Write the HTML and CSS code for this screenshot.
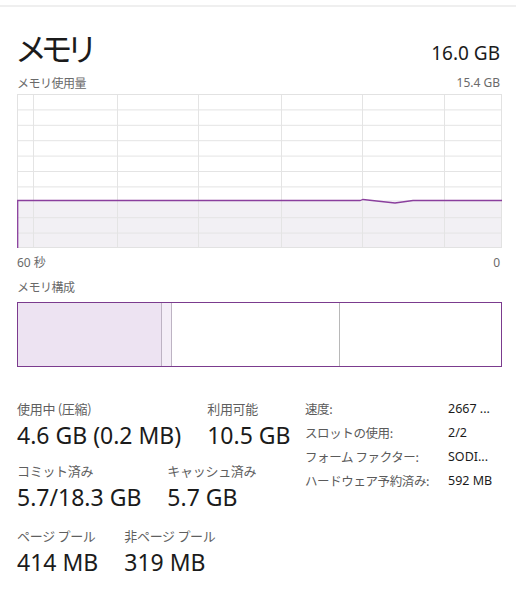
FILE: index.html
```html
<!DOCTYPE html>
<html lang="ja">
<head>
<meta charset="utf-8">
<link rel="stylesheet" href="styles.css">
</head>
<body>
<div class="rule"></div>
<div class="page">
  <header class="head">
    <h1 class="title">メモリ</h1>
    <div class="total">16.0 GB</div>
  </header>
  <div class="sub"><span>メモリ使用量</span><span>15.4 GB</span></div>
  <div class="graph">
    <svg width="485" height="154" viewBox="0 0 485 154">
      <rect x="0" y="106" width="485" height="48" fill="#f2f0f4"/>
      <g stroke="#e4e4e4" stroke-width="1">
        <line x1="0" y1="15.9" x2="485" y2="15.9"/>
        <line x1="0" y1="31.3" x2="485" y2="31.3"/>
        <line x1="0" y1="46.7" x2="485" y2="46.7"/>
        <line x1="0" y1="62.1" x2="485" y2="62.1"/>
        <line x1="0" y1="77.5" x2="485" y2="77.5"/>
        <line x1="0" y1="92.9" x2="485" y2="92.9"/>
        <line x1="0" y1="123.7" x2="485" y2="123.7"/>
        <line x1="0" y1="139.1" x2="485" y2="139.1"/>
        <line x1="16.5" y1="0" x2="16.5" y2="154"/>
        <line x1="100.5" y1="0" x2="100.5" y2="154"/>
        <line x1="181.5" y1="0" x2="181.5" y2="154"/>
        <line x1="264.5" y1="0" x2="264.5" y2="154"/>
        <line x1="345.5" y1="0" x2="345.5" y2="154"/>
        <line x1="427.5" y1="0" x2="427.5" y2="154"/>
      </g>
      <rect x="0.5" y="0.5" width="484" height="153" fill="none" stroke="#e2e2e2"/>
      <polyline points="0.7,154 0.7,106.5 343,106.5 346,105.5 378,109 396,106.5 485,106.5" fill="none" stroke="#8a3f9d" stroke-width="1.3"/>
    </svg>
  </div>
  <div class="axis"><span>60 秒</span><span>0</span></div>
  <div class="sub sub-comp"><span>メモリ構成</span></div>
  <div class="comp">
    <div class="seg seg-used"></div>
    <div class="seg seg-mod"></div>
    <div class="seg seg-standby"></div>
    <div class="seg seg-free"></div>
  </div>
  <div class="stats">
    <div class="left">
      <div class="row">
        <div class="item"><div class="label">使用中 (圧縮)</div><div class="value">4.6 GB (0.2 MB)</div></div>
        <div class="item"><div class="label">利用可能</div><div class="value">10.5 GB</div></div>
      </div>
      <div class="row">
        <div class="item"><div class="label">コミット済み</div><div class="value">5.7/18.3 GB</div></div>
        <div class="item"><div class="label">キャッシュ済み</div><div class="value">5.7 GB</div></div>
      </div>
      <div class="row row-last">
        <div class="item"><div class="label">ページ プール</div><div class="value">414 MB</div></div>
        <div class="item"><div class="label">非ページ プール</div><div class="value">319 MB</div></div>
      </div>
    </div>
    <dl class="right">
      <dt>速度:</dt><dd>2667 ...</dd>
      <dt>スロットの使用:</dt><dd>2/2</dd>
      <dt>フォーム ファクター:</dt><dd>SODI...</dd>
      <dt>ハードウェア予約済み:</dt><dd>592 MB</dd>
    </dl>
  </div>
</div>
</body>
</html>
```

FILE: styles.css
```css
* { box-sizing: border-box; }
html, body { margin: 0; padding: 0; background: #ffffff; }
body {
  font-family: "Noto Sans", "Noto Sans CJK JP", sans-serif;
  color: #1b1b1b;
  width: 527px;
  height: 601px;
  overflow: hidden;
}
.rule {
  height: 2px;
  margin-top: 5px;
  width: 516px;
  background: #efefef;
}
.page {
  padding: 0 25px 0 17px;
}
.head {
  display: flex;
  justify-content: space-between;
  align-items: flex-end;
  margin-top: 21px;
  height: 38px;
}
.title {
  margin: 0 0 0 -2px;
  font-family: "Noto Sans CJK JP", sans-serif;
  font-weight: 400;
  font-size: 32px;
  line-height: 38px;
  letter-spacing: -6.5px;
}
.total {
  font-size: 19px;
  line-height: 24px;
  margin-bottom: 1px;
  margin-right: 2px;
}
.sub {
  display: flex;
  justify-content: space-between;
  font-size: 12px;
  line-height: 16px;
  color: #6a6a6a;
  margin-top: 9px;
}
.sub span:first-child {
  font-family: "Noto Sans CJK JP", sans-serif;
  letter-spacing: -0.5px;
}
.sub span:last-child { margin-right: 2px; }
.graph {
  margin-top: 3px;
  height: 154px;
}
.graph svg { display: block; }
.axis {
  display: flex;
  justify-content: space-between;
  font-size: 12px;
  line-height: 16px;
  color: #6a6a6a;
  margin-top: 7px;
}
.axis span:last-child { margin-right: 2px; }
.sub-comp { margin-top: 8px; }
.comp {
  margin-top: 7px;
  height: 65px;
  width: 485px;
  border: 1.5px solid #7b3b8e;
  display: flex;
}
.seg { height: 100%; }
.seg-used { width: 144px; background: #ede3f2; border-right: 1px solid #bdb3c3; }
.seg-mod { width: 10px; background: #f4eef7; border-right: 1px solid #bdb3c3; }
.seg-standby { width: 168px; background: #fff; border-right: 1px solid #b8b8b8; }
.seg-free { flex: 1; background: #fff; }
.stats {
  display: flex;
  align-items: flex-start;
  margin-top: 33px;
}
.left {
  width: 288px;
  display: flex;
  flex-direction: column;
  gap: 11px;
}
.row {
  display: flex;
  gap: 26px;
}
.row-last { margin-top: 3px; }
.label {
  font-family: "Noto Sans CJK JP", sans-serif;
  font-size: 13px;
  line-height: 18px;
  color: #5f5f5f;
  letter-spacing: -0.3px;
}
.value {
  font-size: 23px;
  line-height: 32px;
  color: #1b1b1b;
  margin-top: 1px;
}
.right {
  margin: 0;
  display: grid;
  grid-template-columns: 143px auto;
  align-content: start;
  row-gap: 6px;
  font-size: 12.5px;
  line-height: 18px;
}
.right dt {
  font-family: "Noto Sans CJK JP", sans-serif;
  color: #5a5a5a;
  letter-spacing: -0.4px;
}
.right dd {
  margin: 0;
  color: #1b1b1b;
}
```
